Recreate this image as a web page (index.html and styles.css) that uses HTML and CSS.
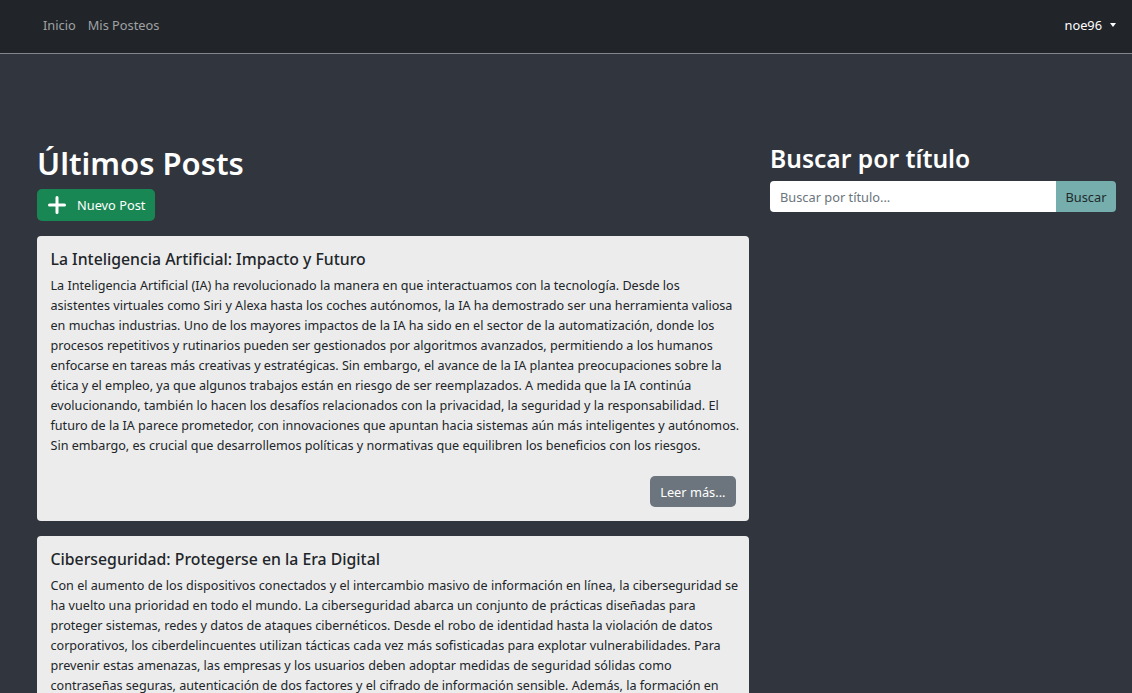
FILE: index.html
```html
<!DOCTYPE html>
<html lang="es">
<head>
<meta charset="utf-8">
<title>Últimos Posts</title>
<link rel="stylesheet" href="styles.css">
</head>
<body>
<nav class="navbar">
  <div class="nav-left">
    <a class="nav-link" href="#">Inicio</a>
    <a class="nav-link" href="#">Mis Posteos</a>
  </div>
  <div class="nav-right">
    <a class="nav-user" href="#">noe96<span class="caret"></span></a>
  </div>
</nav>
<main class="main">
  <section class="posts">
    <h1 class="page-title">Últimos Posts</h1>
    <a class="btn btn-new" href="#">
      <svg class="plus" viewBox="0 0 18 18" width="18" height="18"><path d="M9 1.5V16.5M1.5 9H16.5" stroke="#fff" stroke-width="3" stroke-linecap="round" fill="none"/></svg>
      <span>Nuevo Post</span>
    </a>
    <article class="card">
      <h5 class="card-title">La Inteligencia Artificial: Impacto y Futuro</h5>
      <p class="card-text">La Inteligencia Artificial (IA) ha revolucionado la manera en que interactuamos con la tecnología. Desde los<br>
asistentes virtuales como Siri y Alexa hasta los coches autónomos, la IA ha demostrado ser una herramienta valiosa<br>
en muchas industrias. Uno de los mayores impactos de la IA ha sido en el sector de la automatización, donde los<br>
procesos repetitivos y rutinarios pueden ser gestionados por algoritmos avanzados, permitiendo a los humanos<br>
enfocarse en tareas más creativas y estratégicas. Sin embargo, el avance de la IA plantea preocupaciones sobre la<br>
ética y el empleo, ya que algunos trabajos están en riesgo de ser reemplazados. A medida que la IA continúa<br>
evolucionando, también lo hacen los desafíos relacionados con la privacidad, la seguridad y la responsabilidad. El<br>
futuro de la IA parece prometedor, con innovaciones que apuntan hacia sistemas aún más inteligentes y autónomos.<br>
Sin embargo, es crucial que desarrollemos políticas y normativas que equilibren los beneficios con los riesgos.</p>
      <div class="card-actions"><a class="btn btn-read" href="#">Leer más...</a></div>
    </article>
    <article class="card">
      <h5 class="card-title">Ciberseguridad: Protegerse en la Era Digital</h5>
      <p class="card-text">Con el aumento de los dispositivos conectados y el intercambio masivo de información en línea, la ciberseguridad se<br>
ha vuelto una prioridad en todo el mundo. La ciberseguridad abarca un conjunto de prácticas diseñadas para<br>
proteger sistemas, redes y datos de ataques cibernéticos. Desde el robo de identidad hasta la violación de datos<br>
corporativos, los ciberdelincuentes utilizan tácticas cada vez más sofisticadas para explotar vulnerabilidades. Para<br>
prevenir estas amenazas, las empresas y los usuarios deben adoptar medidas de seguridad sólidas como<br>
contraseñas seguras, autenticación de dos factores y el cifrado de información sensible. Además, la formación en<br>
ciberseguridad es fundamental para que las personas reconozcan los riesgos y actúen de manera responsable.</p>
      <div class="card-actions"><a class="btn btn-read" href="#">Leer más...</a></div>
    </article>
  </section>
  <aside class="search">
    <h2 class="search-title">Buscar por título</h2>
    <form class="input-group">
      <input class="search-input" type="text" placeholder="Buscar por título...">
      <button class="btn-search" type="button">Buscar</button>
    </form>
  </aside>
</main>
</body>
</html>
```
FILE: styles.css
```css
* { box-sizing: border-box; }
html, body { margin: 0; padding: 0; }
body {
  background: #31353e;
  font-family: "Noto Sans", "Liberation Sans", sans-serif;
  font-size: 12.8px;
  line-height: 20px;
  color: #212529;
  height: 693px;
  overflow: hidden;
}
a { text-decoration: none; }

.navbar {
  height: 54px;
  background: #212529;
  border-bottom: 1px solid #83878b;
  display: flex;
  align-items: center;
  justify-content: space-between;
  padding: 0 16px 3px 43px;
}
.nav-left { display: flex; gap: 12px; }
.nav-link { color: rgba(255,255,255,0.58); }
.nav-user { color: #fff; display: flex; align-items: center; }
.caret {
  display: inline-block;
  margin-left: 8px;
  border-top: 4px solid #fff;
  border-left: 3.5px solid transparent;
  border-right: 3.5px solid transparent;
}

.main {
  display: grid;
  grid-template-columns: 712px 346px;
  column-gap: 21px;
  padding: 89px 0 0 37px;
  align-items: start;
}

.page-title {
  margin: 0 0 6px;
  font-size: 31px;
  line-height: 40px;
  font-weight: 600;
  color: #fff;
}
.btn {
  display: inline-flex;
  align-items: center;
  border-radius: 5px;
  color: #fff;
  white-space: nowrap;
}
.btn-new {
  height: 32px;
  width: 118px;
  background: #198754;
  padding: 0 11px;
  gap: 11px;
  margin-bottom: 15px;
}
.plus { flex: none; }

.card {
  background: #ececec;
  border-radius: 4px;
  padding: 13px 13.5px 14px;
  margin-bottom: 15px;
}
.card-title {
  margin: 0 0 7px;
  font-size: 15.8px;
  line-height: 20px;
  font-weight: 500;
}
.card-text {
  margin: 0 0 20px;
  font-size: 12.6px;
  white-space: nowrap;
}
.card-actions { display: flex; justify-content: flex-end; }
.btn-read {
  height: 31px;
  padding: 0 10px;
  background: #6c757d;
}

.search-title {
  margin: 0 0 6px;
  font-size: 24.6px;
  line-height: 32px;
  font-weight: 600;
  color: #fff;
}
.input-group { display: flex; height: 31px; margin: 0; }
.search-input {
  flex: 1;
  min-width: 0;
  border: 0;
  border-radius: 4px 0 0 4px;
  padding: 0 10px;
  font: inherit;
  color: #212529;
  background: #fff;
}
.search-input::placeholder { color: #6c757d; }
.btn-search {
  width: 60px;
  border: 0;
  border-radius: 0 4px 4px 0;
  background: #76aead;
  color: #1e2a2c;
  font: inherit;
  padding: 0;
}
```
